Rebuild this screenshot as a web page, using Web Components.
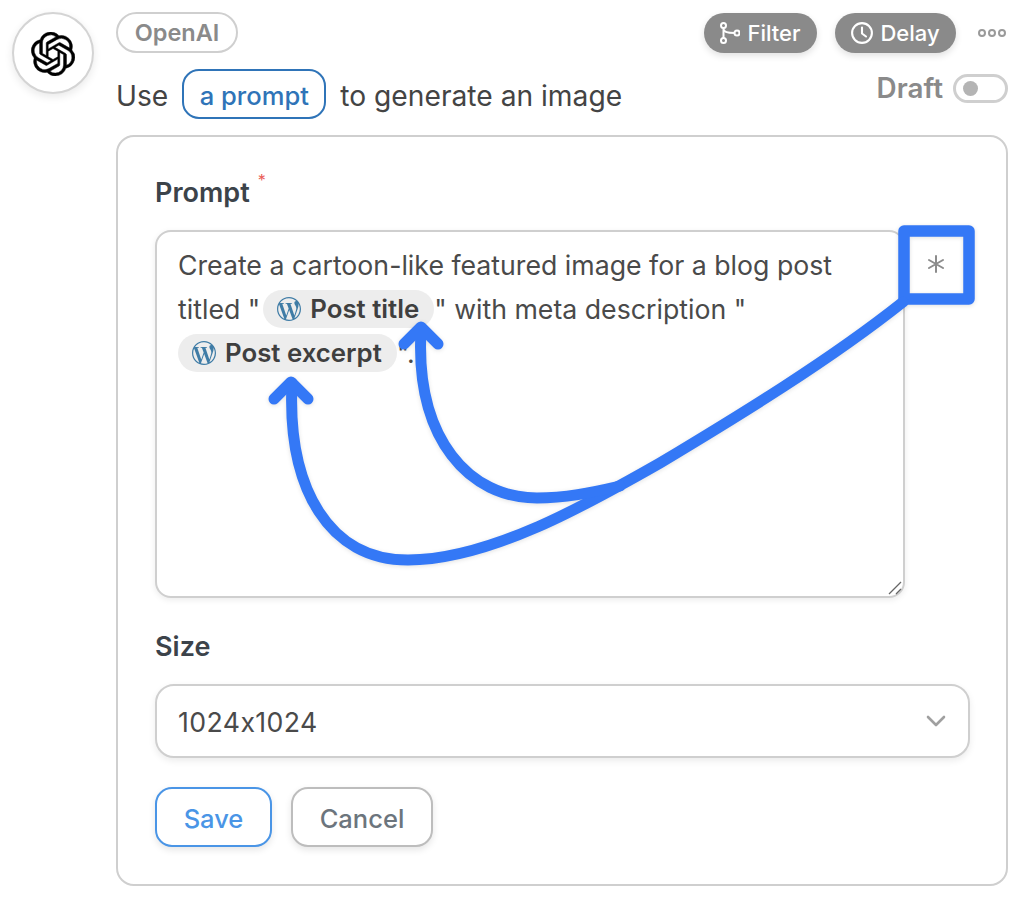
<!DOCTYPE html>
<html lang="en"><head><meta charset="utf-8"><title>OpenAI step</title>
<style>
html,body{margin:0;padding:0;background:#fff}
body{font-family:Inter,"Liberation Sans",sans-serif;font-feature-settings:"calt" 0;width:1024px;height:898px;overflow:hidden}
</style></head><body>
<flow-step>
  <step-avatar slot="avatar"></step-avatar>
  <step-header slot="header"></step-header>
  <step-form slot="form"></step-form>
</flow-step>
<script>
const OPENAI="M22.2819 9.8211a5.9847 5.9847 0 0 0-.5157-4.9108 6.0462 6.0462 0 0 0-6.5098-2.9A6.0651 6.0651 0 0 0 4.9807 4.1818a5.9847 5.9847 0 0 0-3.9977 2.9 6.0462 6.0462 0 0 0 .7427 7.0966 5.98 5.98 0 0 0 .511 4.9107 6.051 6.051 0 0 0 6.5146 2.9001A5.9847 5.9847 0 0 0 13.2599 24a6.0557 6.0557 0 0 0 5.7718-4.2058 5.9894 5.9894 0 0 0 3.9977-2.9001 6.0557 6.0557 0 0 0-.7475-7.0729zm-9.022 12.6081a4.4755 4.4755 0 0 1-2.8764-1.0408l.1419-.0804 4.7783-2.7582a.7948.7948 0 0 0 .3927-.6813v-6.7369l2.02 1.1686a.071.071 0 0 1 .038.052v5.5826a4.504 4.504 0 0 1-4.4945 4.4944zm-9.6607-4.1254a4.4708 4.4708 0 0 1-.5346-3.0137l.142.0852 4.783 2.7582a.7712.7712 0 0 0 .7806 0l5.8428-3.3685v2.3324a.0804.0804 0 0 1-.0332.0615L9.74 19.9502a4.4992 4.4992 0 0 1-6.1408-1.6464zM2.3408 7.8956a4.485 4.485 0 0 1 2.3655-1.9728V11.6a.7664.7664 0 0 0 .3879.6765l5.8144 3.3543-2.0201 1.1685a.0757.0757 0 0 1-.071 0l-4.8303-2.7865A4.504 4.504 0 0 1 2.3408 7.872zm16.5963 3.8558L13.1038 8.364 15.1192 7.2a.0757.0757 0 0 1 .071 0l4.8303 2.7913a4.4944 4.4944 0 0 1-.6765 8.1042v-5.6772a.79.79 0 0 0-.407-.667zm2.0107-3.0231l-.142-.0852-4.7735-2.7818a.7759.7759 0 0 0-.7854 0L9.409 9.2297V6.8974a.0662.0662 0 0 1 .0284-.0615l4.8303-2.7866a4.4992 4.4992 0 0 1 6.6802 4.66zM8.3065 12.863l-2.02-1.1638a.0804.0804 0 0 1-.038-.0567V6.0742a4.4992 4.4992 0 0 1 7.3757-3.4537l-.142.0805L8.704 5.459a.7948.7948 0 0 0-.3927.6813zm1.0976-2.3654l2.602-1.4998 2.6069 1.4998v2.9994l-2.5974 1.4997-2.6067-1.4997Z";
const WP="M21.469 6.825c.84 1.537 1.318 3.3 1.318 5.175 0 3.979-2.156 7.456-5.363 9.325l3.295-9.527c.615-1.54.82-2.771.82-3.864 0-.405-.026-.78-.07-1.11m-7.981.105c.647-.03 1.232-.105 1.232-.105.582-.075.514-.93-.067-.899 0 0-1.755.135-2.88.135-1.064 0-2.85-.15-2.85-.15-.585-.03-.661.855-.075.885 0 0 .54.061 1.125.09l1.68 4.605-2.37 7.08L5.354 6.9c.649-.03 1.234-.1 1.234-.1.585-.075.516-.93-.065-.896 0 0-1.746.138-2.874.138-.2 0-.438-.008-.69-.015C4.911 3.15 8.235 1.215 12 1.215c2.809 0 5.365 1.072 7.286 2.833-.046-.003-.091-.009-.141-.009-1.06 0-1.812.923-1.812 1.914 0 .89.513 1.643 1.06 2.531.411.72.89 1.643.89 2.977 0 .915-.354 2-.821 3.479l-1.075 3.585-3.9-11.61.001.014zM12 22.784c-1.059 0-2.081-.153-3.048-.437l3.237-9.406 3.315 9.087c.024.053.05.101.078.149-1.12.393-2.325.609-3.582.609M1.211 12c0-1.564.336-3.05.935-4.39L7.29 21.709C3.694 19.96 1.212 16.271 1.211 12M12 0C5.385 0 0 5.385 0 12s5.385 12 12 12 12-5.385 12-12S18.615 0 12 0";

function def(name,html){
  customElements.define(name,class extends HTMLElement{
    constructor(){super();this.attachShadow({mode:"open"}).innerHTML=html;}
  });
}

def("flow-step",`<style>
:host{display:block;position:relative;width:1024px;height:898px;box-sizing:border-box;padding:12px 16px 12px 12px;color:#444}
.wrap{display:flex;gap:22px;align-items:flex-start}
.main{flex:1;min-width:0;display:flex;flex-direction:column}
svg{position:absolute;left:0;top:0;pointer-events:none}
</style>
<div class="wrap"><slot name="avatar"></slot><div class="main"><slot name="header"></slot><slot name="form"></slot></div></div>
<svg width="1024" height="898" viewBox="0 0 1024 898" fill="none" stroke="#3478f6" stroke-linecap="round" stroke-linejoin="round" style="filter:drop-shadow(0 1px 2px rgba(0,0,0,.12))">
  <rect x="904" y="231" width="65" height="68" stroke-width="11.5"/>
  <path stroke-width="11" d="M903 302C830 360 740 415 660 463C590 503 490 560 408 560C330 560 287 490 292 383"/>
  <path stroke-width="11" d="M274 399L291 382L308 399"/>
  <path stroke-width="11" d="M620 486C590 493 565 498 537 498C470 498 415 440 421 330"/>
  <path stroke-width="11" d="M404 344L421 327L438 344"/>
</svg>`);

def("step-avatar",`<style>
:host{display:flex;width:82px;height:82px;box-sizing:border-box;border:2px solid #d4d4d4;border-radius:50%;background:#fff;align-items:center;justify-content:center;box-shadow:0 3px 8px rgba(0,0,0,.09);flex:none}
svg{margin-top:2px}
</style><svg width="44" height="44" viewBox="0 0 24 24" fill="#000" stroke="#000" stroke-width=".25"><path d="${OPENAI}"/></svg>`);

def("tag-pill",`<style>
:host{display:inline-flex;align-items:center;justify-content:center;box-sizing:border-box;font-weight:500;white-space:nowrap}
:host([kind=app]){height:41px;width:122px;border:2px solid #cfcfcf;border-radius:21px;color:#8a8a8a;font-size:23.5px;font-weight:600}
:host([kind=action]){height:40px;margin-top:1px;border-radius:20px;background:#8a8a8a;color:#fff;font-size:22px;gap:7px;box-shadow:0 3px 7px rgba(0,0,0,.12)}
:host([kind=var]){height:50px;width:144px;padding-top:2px;border:2px solid #2f74b8;border-radius:17px;color:#2f74b8;font-size:25.6px;font-weight:500}
</style><slot></slot>`);

def("step-toggle",`<style>
:host{display:flex;align-items:center;gap:10px;color:#8a8a8a;font-size:27.8px;font-weight:600}
.t{width:55px;height:29px;box-sizing:border-box;border:3px solid #cfcfcf;border-radius:15px;display:flex;align-items:center;padding-left:7px}
.d{width:15px;height:15px;border-radius:50%;background:#b4b4b4}
</style><span><slot></slot></span><span class="t"><span class="d"></span></span>`);

def("step-header",`<style>
:host{display:block;height:123px}
.r1{display:flex;align-items:center;height:41px}
.sp{flex:1}
.a{display:flex;gap:18px;margin-right:22px}
.dots{margin-right:2px;display:block}
.r2{display:flex;align-items:flex-start;margin-top:16px;font-size:28.2px;height:50px}
.sent{display:flex;align-items:center;height:50px;gap:14px}
.sent>span{padding-top:3px}
step-toggle{margin-top:2px}
svg{display:block;flex:none}
</style>
<div class="r1"><tag-pill kind="app">OpenAI</tag-pill><span class="sp"></span>
 <div class="a">
  <tag-pill kind="action" style="width:113px"><svg width="20" height="22" viewBox="0 0 20 22" fill="none" stroke="#fff" stroke-width="2"><circle cx="3.5" cy="3.5" r="2.5"/><circle cx="3.5" cy="18.5" r="2.5"/><circle cx="17" cy="11" r="2.5"/><path d="M3.5 6V16M3.5 7C3.5 10 7 11 14.5 11"/></svg>Filter</tag-pill>
  <tag-pill kind="action" style="width:121px"><svg width="22" height="22" viewBox="0 0 22 22" fill="none" stroke="#fff" stroke-width="2.1" stroke-linecap="round" stroke-linejoin="round"><circle cx="11" cy="11" r="9.9"/><path d="M11 5.5V11.5L15 14.5"/></svg>Delay</tag-pill>
 </div>
 <svg class="dots" width="28" height="12" viewBox="0 0 28 12" fill="none" stroke="#9a9a9a" stroke-width="2"><circle cx="4" cy="6" r="3"/><circle cx="14" cy="6" r="3"/><circle cx="24" cy="6" r="3"/></svg>
</div>
<div class="r2"><div class="sent"><span>Use</span><tag-pill kind="var">a prompt</tag-pill><span>to generate an image</span></div><span class="sp"></span><step-toggle>Draft</step-toggle></div>`);

def("var-chip",`<style>
:host{display:inline-flex;align-items:center;gap:9px;height:37.5px;padding:0 15px 0 14px;border-radius:19px;background:#ededed;font-size:25.8px;font-weight:600;color:#3f3f3f;vertical-align:middle;margin-top:-5px;box-sizing:border-box}
svg{flex:none}
</style><svg width="24" height="24" viewBox="0 0 24 24" fill="#3f7ca6"><path d="${WP}"/></svg><slot></slot>`);

def("req-mark",`<style>
:host{display:inline-block;color:#ea6058;font-size:16px;font-weight:400;line-height:0;vertical-align:baseline;position:relative;top:-16px;left:8px}
</style><slot></slot>`);

def("form-field",`<style>
:host{display:block}
.l{font-size:27px;font-weight:600;color:#3c434a;line-height:40px;height:38px;margin-bottom:19px}
</style><div class="l"><slot name="label"></slot></div><slot></slot>`);

def("prompt-box",`<style>
:host{display:block;position:relative;width:750px;height:368px;box-sizing:border-box;border:2px solid #cfcfcf;border-radius:16px;background:#fff;padding:11px 21px;font-size:26.7px;line-height:44px;color:#4a4a4a;box-shadow:0 2px 6px rgba(0,0,0,.08)}
.ast{position:absolute;left:770px;top:23px}
.grip{position:absolute;right:0;bottom:0}
</style><slot></slot>
<svg class="ast" width="18" height="18" viewBox="0 0 18 18" stroke="#8c8c8c" stroke-width="2" stroke-linecap="round"><path d="M9 1V17M2 5L16 13M16 5L2 13"/></svg>
<svg class="grip" width="16" height="16" viewBox="0 0 16 16" stroke="#666" stroke-width="1.3"><path d="M2 14L14 2M9 14L14 9"/></svg>`);

def("size-select",`<style>
:host{display:flex;align-items:center;justify-content:space-between;width:815px;height:74px;box-sizing:border-box;border:2px solid #cfcfcf;border-radius:19px;background:#fff;padding:0 22px 0 21px;font-size:26.7px;letter-spacing:.4px;color:#4a4a4a;box-shadow:0 3px 7px rgba(0,0,0,.08)}
span{padding-top:1px}
</style><span><slot></slot></span><svg width="20" height="12" viewBox="0 0 20 12" fill="none" stroke="#a0a0a0" stroke-width="2.6" stroke-linecap="round" stroke-linejoin="round"><path d="M2 2L10 10L18 2"/></svg>`);

def("form-btn",`<style>
:host{display:inline-flex;align-items:center;justify-content:center;height:60px;padding-top:2px;box-sizing:border-box;border-radius:17px;border:2px solid #bdbdbd;background:#fff;font-size:25.5px;font-weight:500;color:#6c757d;box-shadow:0 3px 7px rgba(0,0,0,.1)}
:host([primary]){border-color:#4a95e6;color:#4a95e6}
</style><slot></slot>`);

def("step-form",`<style>
:host{display:block;box-sizing:border-box;height:751px;border:2px solid #cfcfcf;border-radius:18px;background:#fff;padding:36px 36px 36px 37px}
form-field+form-field{margin-top:29px}
.btns{display:flex;gap:19px;margin-top:29px}
var-chip.mid{margin-left:3px}
</style>
<form-field><span slot="label">Prompt<req-mark>*</req-mark></span>
 <prompt-box>Create a cartoon-like featured image for a blog post<br>titled "<var-chip class="mid">Post title</var-chip>" with meta description "<br><var-chip>Post excerpt</var-chip>".</prompt-box>
</form-field>
<form-field><span slot="label">Size</span><size-select>1024x1024</size-select></form-field>
<div class="btns"><form-btn primary style="width:117px">Save</form-btn><form-btn style="width:142px">Cancel</form-btn></div>`);
</script>
</body></html>
